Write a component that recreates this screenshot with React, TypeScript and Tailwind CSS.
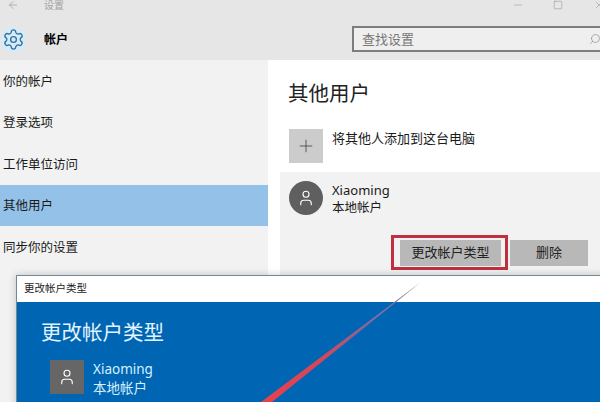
import React from 'react';
import { ArrowLeft, Minus, Square, X, Search, Settings, Plus, User } from 'lucide-react';

const navItems = ['你的帐户', '登录选项', '工作单位访问', '其他用户', '同步你的设置'];

export default function App() {
  return (
    <div className="relative w-[600px] h-[402px] overflow-hidden bg-white font-['Noto_Sans','Noto_Sans_CJK_SC',sans-serif] text-[#1a1a1a]">
      <div className="h-[60px] bg-[#e6e6e6] flex flex-col">
        <div className="h-[10px] flex items-center justify-between">
          <div className="flex items-center">
            <ArrowLeft className="ml-[7px] w-[12px] h-[12px] text-[#909090]" strokeWidth={1.2} />
            <span className="ml-[25px] text-[10px] leading-none text-[#a3a3a3]">设置</span>
          </div>
          <div className="flex items-center">
            <Minus className="w-[12px] h-[12px] text-[#8a8a8a]" strokeWidth={1} />
            <Square className="ml-[29px] w-[10px] h-[10px] text-[#8a8a8a]" strokeWidth={1.2} />
            <X className="ml-[30px] -mr-[5px] w-[12px] h-[12px] text-[#8a8a8a]" strokeWidth={1} />
          </div>
        </div>
        <div className="flex items-center h-[50px] pt-[8px]">
          <div className="ml-[1px] w-[25px] h-[25px] shrink-0 rounded-full bg-[#d6ebf8] flex items-center justify-center">
            <Settings className="w-[23px] h-[23px] text-[#2f6f9f]" strokeWidth={1.4} />
          </div>
          <span className="ml-[18px] mt-[2px] w-[24px] shrink-0 whitespace-nowrap text-[12px] font-bold text-black">帐户</span>
          <div className="ml-[284px] w-[260px] h-[26px] shrink-0 border-2 border-[#7d7d7d] bg-[#efefef] flex items-center">
            <span className="ml-[8px] text-[13px] leading-none text-[#777777]">查找设置</span>
            <Search className="ml-[175px] w-[12px] h-[12px] shrink-0 text-[#808080] -scale-x-100" strokeWidth={1.2} />
          </div>
        </div>
      </div>

      <div className="flex h-[342px]">
        <div className="w-[268px] bg-[#f2f2f2]">
          {navItems.map((item, index) => (
            <div
              key={item}
              className={`h-[41.5px] flex items-center pl-[3px] pt-[3px] text-[12.5px] ${index === 3 ? 'bg-[#93c1e8]' : ''}`}
            >
              {item}
            </div>
          ))}
        </div>

        <div className="flex-1 min-w-0">
          <h1 className="ml-[20px] mt-[18px] h-[30px] text-[20.5px] leading-[30px] font-normal text-[#222222]">其他用户</h1>
          <div className="ml-[21px] mt-[21px] flex">
            <div className="w-[34px] h-[34px] bg-[#cccccc] flex items-center justify-center">
              <Plus className="w-[20px] h-[20px] text-[#444444]" strokeWidth={1} />
            </div>
            <span className="ml-[9px] -mt-[1px] text-[13px] leading-[20px]">将其他人添加到这台电脑</span>
          </div>
          <div className="ml-[12px] mt-[9px] h-[103px] bg-[#f2f2f2] pl-[9px] pt-[9px]">
            <div className="flex h-[34px]">
              <div className="w-[34px] h-[34px] rounded-full bg-[#5f5f5f] flex items-center justify-center">
                <User className="w-[18px] h-[18px] text-white" strokeWidth={1.5} />
              </div>
              <div className="ml-[9px] text-[13px] leading-[17px] mt-[1px]">
                <div>Xiaoming</div>
                <div className="text-[12.5px]">本地帐户</div>
              </div>
            </div>
            <div className="mt-[20px] ml-[102px] flex items-center">
              <div className="border-[3px] border-[#c0303f] pl-[6px] pr-[4px] pt-[2px] pb-[1px]">
                <button className="w-[101px] h-[26px] bg-[#b8b8b8] text-[13px] text-[#222222] flex items-center justify-center">
                  更改帐户类型
                </button>
              </div>
              <button className="ml-[2px] w-[78px] h-[26px] bg-[#b8b8b8] text-[13px] text-[#222222] flex items-center justify-center">
                删除
              </button>
            </div>
          </div>
        </div>
      </div>

      <div className="absolute left-[16px] top-[275px] w-[600px] h-[140px] border border-[#6f8a96] shadow-[0_0_8px_rgba(0,0,0,0.2)]">
        <div className="h-[26px] bg-white flex items-center pl-[7px] text-[10.5px] text-[#222222]">更改帐户类型</div>
        <div className="h-[114px] bg-[#0066b3] pl-[24px] pt-[16px] text-white">
          <div className="text-[20.5px] leading-[28px] font-normal text-[#e4f4ff]">更改帐户类型</div>
          <div className="flex ml-[9px] mt-[14px]">
            <div className="w-[34px] h-[34px] bg-[#666666] flex items-center justify-center">
              <User className="w-[18px] h-[18px] text-white" strokeWidth={1.5} />
            </div>
            <div className="ml-[9px] text-[13.5px] leading-[19px] text-[#d5f0ff]">
              <div>Xiaoming</div>
              <div>本地帐户</div>
            </div>
          </div>
        </div>
      </div>

      <svg className="absolute left-0 top-0 pointer-events-none" width="600" height="402" viewBox="0 0 600 402">
        <defs>
          <linearGradient id="arrow" x1="420" y1="283" x2="262" y2="402" gradientUnits="userSpaceOnUse">
            <stop offset="0" stopColor="#8a7a7a" />
            <stop offset="0.3" stopColor="#7a6ca8" />
            <stop offset="0.6" stopColor="#d0485c" />
            <stop offset="1" stopColor="#e8404c" />
          </linearGradient>
        </defs>
        <polygon points="421,282 261,402 272,402" fill="url(#arrow)" />
      </svg>
    </div>
  );
}
